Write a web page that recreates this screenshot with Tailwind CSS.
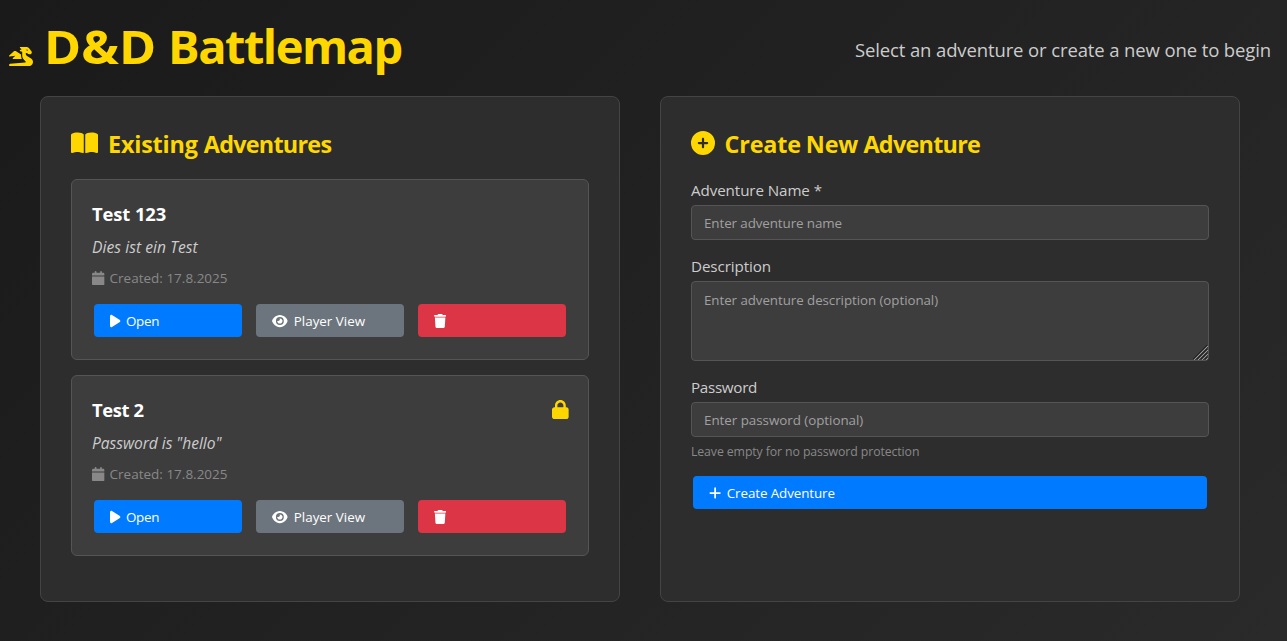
<!DOCTYPE html>
<html lang="en">
<head>
<meta charset="utf-8">
<title>D&amp;D Battlemap</title>
<script src="https://cdn.jsdelivr.net/npm/@tailwindcss/browser@4"></script>
</head>
<body class="h-[641px] overflow-hidden bg-linear-135 from-[#1a1a1a] to-[#2a2a2a] font-['Open_Sans','Noto_Sans',sans-serif] text-[#e0e0e0] whitespace-nowrap">
<svg class="hidden" aria-hidden="true">
  <symbol id="dragon" viewBox="0 0 640 512"><path d="M352 124.5l-51.9-13c-6.5-1.6-11.3-7.1-12-13.8s2.8-13.1 8.7-16.1l40.8-20.4L294.4 28.8c-5.5-4.1-7.8-11.3-5.6-17.9S297.1 0 304 0L416 0l32 0 16 0c30.2 0 58.7 14.2 76.8 38.4l57.6 76.8c6.2 8.3 9.6 18.4 9.6 28.8c0 26.5-21.5 48-48 48l-21.5 0c-17 0-33.3-6.7-45.3-18.7L480 160l-32 0 0 21.5c0 24.8 12.8 47.9 33.8 61.1l106.6 66.6c32.1 20.1 51.6 55.2 51.6 93.1C640 462.9 590.9 512 530.2 512L496 512l-64 0L32.3 512c-3.3 0-6.6-.4-9.6-1.4C13.5 507.8 6 501 2.4 492.1C1 488.7 .2 485.2 0 481.4c-.2-3.7 .3-7.3 1.3-10.7c2.8-9.2 9.6-16.7 18.6-20.4c3-1.2 6.2-2 9.5-2.2L433.3 412c8.3-.7 14.7-7.7 14.7-16.1c0-4.3-1.7-8.4-4.7-11.4l-44.4-44.4c-30-30-46.9-70.7-46.9-113.1l0-45.5 0-57zM512 72.3c0-.1 0-.2 0-.3s0-.2 0-.3l0 .6zm-1.3 7.4L464.3 68.1c-.2 1.3-.3 2.6-.3 3.9c0 13.3 10.7 24 24 24c10.6 0 19.5-6.8 22.7-16.3zM130.9 116.5c16.3-14.5 40.4-16.2 58.5-4.1l130.6 87 0 27.5c0 32.8 8.4 64.8 24 93l-232 0c-6.7 0-12.7-4.2-15-10.4s-.5-13.3 4.6-17.7L171 232.3 18.4 255.8c-7 1.1-13.9-2.6-16.9-9s-1.5-14.1 3.8-18.8L130.9 116.5z"/></symbol>
  <symbol id="book" viewBox="0 0 576 512"><path d="M249.6 471.5c10.8 3.8 22.4-4.1 22.4-15.5l0-377.4c0-4.2-1.6-8.4-5-11C247.4 52 202.4 32 144 32C93.5 32 46.3 45.3 18.1 56.1C6.8 60.5 0 71.7 0 83.8L0 454.1c0 11.9 12.8 20.2 24.1 16.5C55.6 460.1 105.5 448 144 448c33.9 0 79 14 105.6 23.5zm76.8 0C353 462 398.1 448 432 448c38.5 0 88.4 12.1 119.9 22.6c11.3 3.8 24.1-4.6 24.1-16.5l0-370.3c0-12.1-6.8-23.3-18.1-27.6C529.7 45.3 482.5 32 432 32c-58.4 0-103.4 20-123 35.6c-3.3 2.6-5 6.8-5 11L304 456c0 11.4 11.7 19.3 22.4 15.5z"/></symbol>
  <symbol id="pluscircle" viewBox="0 0 512 512"><path d="M256 512A256 256 0 1 0 256 0a256 256 0 1 0 0 512zM232 344l0-64-64 0c-13.3 0-24-10.7-24-24s10.7-24 24-24l64 0 0-64c0-13.3 10.7-24 24-24s24 10.7 24 24l0 64 64 0c13.3 0 24 10.7 24 24s-10.7 24-24 24l-64 0 0 64c0 13.3-10.7 24-24 24s-24-10.7-24-24z"/></symbol>
  <symbol id="calendar" viewBox="0 0 448 512"><path d="M96 32l0 32L48 64C21.5 64 0 85.5 0 112l0 48 448 0 0-48c0-26.5-21.5-48-48-48l-48 0 0-32c0-17.7-14.3-32-32-32s-32 14.3-32 32l0 32L160 64l0-32c0-17.7-14.3-32-32-32S96 14.3 96 32zM448 192L0 192 0 464c0 26.5 21.5 48 48 48l352 0c26.5 0 48-21.5 48-48l0-272z"/></symbol>
  <symbol id="play" viewBox="0 0 384 512"><path d="M73 39c-14.8-9.1-33.4-9.4-48.5-.9S0 62.6 0 80L0 432c0 17.4 9.4 33.4 24.5 41.9s33.7 8.1 48.5-.9L361 297c14.3-8.7 23-24.2 23-41s-8.7-32.2-23-41L73 39z"/></symbol>
  <symbol id="eye" viewBox="0 0 576 512"><path d="M288 32c-80.8 0-145.5 36.8-192.6 80.6C48.6 156 17.3 208 2.5 243.7c-3.3 7.9-3.3 16.7 0 24.6C17.3 304 48.6 356 95.4 399.4C142.5 443.2 207.2 480 288 480s145.5-36.8 192.6-80.6c46.8-43.5 78.1-95.4 93-131.1c3.3-7.9 3.3-16.7 0-24.6c-14.9-35.7-46.2-87.7-93-131.1C433.5 68.8 368.8 32 288 32zM144 256a144 144 0 1 1 288 0 144 144 0 1 1 -288 0zm144-64c0 35.3-28.7 64-64 64c-7.1 0-13.9-1.2-20.3-3.3c-5.5-1.8-11.9 1.6-11.7 7.4c.3 6.9 1.3 13.8 3.2 20.7c13.7 51.2 66.4 81.6 117.6 67.9s81.6-66.4 67.9-117.6c-11.1-41.5-47.8-69.4-88.6-71.1c-5.8-.2-9.2 6.1-7.4 11.7c2.1 6.4 3.3 13.2 3.3 20.3z"/></symbol>
  <symbol id="trash" viewBox="0 0 448 512"><path d="M135.2 17.7L128 32 32 32C14.3 32 0 46.3 0 64S14.3 96 32 96l384 0c17.7 0 32-14.3 32-32s-14.3-32-32-32l-96 0-7.2-14.3C307.4 6.8 296.3 0 284.2 0L163.8 0c-12.1 0-23.2 6.8-28.6 17.7zM416 128L32 128 53.2 467c1.6 25.3 22.6 45 47.9 45l245.8 0c25.3 0 46.3-19.7 47.9-45L416 128z"/></symbol>
  <symbol id="lock" viewBox="0 0 448 512"><path d="M144 144l0 48 160 0 0-48c0-44.2-35.8-80-80-80s-80 35.8-80 80zM80 192l0-48C80 64.5 144.5 0 224 0s144 64.5 144 144l0 48 16 0c35.3 0 64 28.7 64 64l0 192c0 35.3-28.7 64-64 64L64 512c-35.3 0-64-28.7-64-64L0 256c0-35.3 28.7-64 64-64l16 0z"/></symbol>
  <symbol id="plus" viewBox="0 0 448 512"><path d="M256 80c0-17.7-14.3-32-32-32s-32 14.3-32 32l0 144L48 224c-17.7 0-32 14.3-32 32s14.3 32 32 32l144 0 0 144c0 17.7 14.3 32 32 32s32-14.3 32-32l0-144 144 0c17.7 0 32-14.3 32-32s-14.3-32-32-32l-144 0 0-144z"/></symbol>
</svg>

<header class="flex h-24 items-start justify-between pl-[8.5px] pr-4">
  <div class="flex text-[#ffd700]">
    <svg class="mt-[47px] h-[19.2px] w-6 fill-current"><use href="#dragon"/></svg>
    <h1 class="mt-[14px] ml-[11px] text-[47px] leading-[64px] font-bold"><span class="mr-[7.5px] inline-block origin-left scale-x-[1.07]">D&amp;D</span> <span class="tracking-[-1.5px]">Battlemap</span></h1>
  </div>
  <p class="mt-[35px] text-[18.5px] leading-[30px] tracking-[-0.12px] text-[#ccc]">Select an adventure or create a new one to begin</p>
</header>

<main class="flex gap-10 pl-10">
  <section class="h-[506px] w-[580px] rounded-lg border border-[#444] bg-[#2d2d2d] p-[30px]">
    <h2 class="flex h-[34px] items-center gap-[10px] text-[23.4px] leading-[34px] font-bold text-[#ffd700]">
      <svg class="mb-[2px] h-6 w-[27px] fill-current"><use href="#book"/></svg><span><span class="tracking-[-0.2px]">Existing</span> <span class="tracking-[-0.75px]">Adventures</span></span></h2>

    <article class="mt-[18px] h-[181px] rounded-md border border-[#555] bg-[#3d3d3d] p-5">
      <h3 class="text-[18.4px] leading-7 font-bold tracking-[-0.1px] text-white">Test 123</h3>
      <p class="mt-[7px] text-[15.6px] leading-6 tracking-[0.05px] text-[#ccc] italic">Dies ist ein Test</p>
      <p class="mt-[9px] flex h-5 items-center gap-[5px] text-[13.5px] leading-5 text-[#888]"><svg class="h-[14.4px] w-[12.6px] fill-current"><use href="#calendar"/></svg>Created: 17.8.2025</p>
      <div class="mt-4 ml-0.5 flex gap-[14px] text-[13.4px] tracking-[-0.1px] text-white">
        <button class="flex h-[33px] w-[148px] items-center gap-[5.5px] rounded bg-[#007bff] pl-4"><svg class="h-[14px] w-[10.5px] fill-current"><use href="#play"/></svg><span class="mt-px tracking-[-0.3px]">Open</span></button>
        <button class="flex h-[33px] w-[148px] items-center gap-[6px] rounded bg-[#6c757d] pl-4"><svg class="h-[14px] w-[15.75px] fill-current"><use href="#eye"/></svg><span class="mt-px tracking-normal">Player View</span></button>
        <button class="flex h-[33px] w-[148px] items-center rounded bg-[#dc3545] pl-4" aria-label="Delete"><svg class="h-[14px] w-[12.25px] fill-current"><use href="#trash"/></svg></button>
      </div>
    </article>

    <article class="mt-[15px] h-[181px] rounded-md border border-[#555] bg-[#3d3d3d] p-5">
      <div class="flex justify-between">
        <h3 class="text-[18.4px] leading-7 font-bold tracking-[-0.4px] text-white">Test 2</h3>
        <svg class="mt-[3.5px] mr-[-1px] h-[19.2px] w-[16.8px] fill-[#ffd700]"><use href="#lock"/></svg>
      </div>
      <p class="mt-[7px] text-[15.6px] leading-6 tracking-[-0.05px] text-[#ccc] italic">Password is "hello"</p>
      <p class="mt-[9px] flex h-5 items-center gap-[5px] text-[13.5px] leading-5 text-[#888]"><svg class="h-[14.4px] w-[12.6px] fill-current"><use href="#calendar"/></svg>Created: 17.8.2025</p>
      <div class="mt-4 ml-0.5 flex gap-[14px] text-[13.4px] tracking-[-0.1px] text-white">
        <button class="flex h-[33px] w-[148px] items-center gap-[5.5px] rounded bg-[#007bff] pl-4"><svg class="h-[14px] w-[10.5px] fill-current"><use href="#play"/></svg><span class="mt-px tracking-[-0.3px]">Open</span></button>
        <button class="flex h-[33px] w-[148px] items-center gap-[6px] rounded bg-[#6c757d] pl-4"><svg class="h-[14px] w-[15.75px] fill-current"><use href="#eye"/></svg><span class="mt-px tracking-normal">Player View</span></button>
        <button class="flex h-[33px] w-[148px] items-center rounded bg-[#dc3545] pl-4" aria-label="Delete"><svg class="h-[14px] w-[12.25px] fill-current"><use href="#trash"/></svg></button>
      </div>
    </article>
  </section>

  <section class="h-[506px] w-[580px] rounded-lg border border-[#444] bg-[#2d2d2d] p-[30px]">
    <h2 class="flex h-[34px] items-center gap-[9.5px] text-[23.4px] leading-[34px] font-bold text-[#ffd700] [word-spacing:-0.75px]">
      <svg class="mb-[2px] h-6 w-6 fill-current"><use href="#pluscircle"/></svg><span><span class="tracking-[-0.2px]">Create New</span> <span class="tracking-[-0.75px]">Adventure</span></span></h2>
    <form class="mt-[17px] flex flex-col">
      <label class="mb-[3px] text-[15.2px] leading-6 tracking-[-0.1px] text-[#ccc]">Adventure Name *</label>
      <input class="h-[35px] rounded border border-[#555] bg-[#3d3d3d] px-3 text-[13.4px] tracking-[-0.1px] placeholder:text-[#a0a0a0]" placeholder="Enter adventure name">
      <label class="mt-[14px] mb-[3px] text-[15.2px] leading-6 tracking-[-0.1px] text-[#ccc]">Description</label>
      <div class="relative h-20">
        <textarea class="block h-20 w-full resize-none rounded border border-[#555] bg-[#3d3d3d] px-3 py-2 text-[13.3px] leading-5 tracking-[-0.04px] placeholder:text-[#a0a0a0]" placeholder="Enter adventure description (optional)"></textarea>
        <svg class="absolute right-px bottom-px h-[15px] w-[15px]" viewBox="0 0 15 15" fill="none">
          <path stroke="#222" d="M0 14L14 0M4 14L14 4M8 14L14 8M12 14L14 12"/>
          <path stroke="#999" d="M1 15L15 1M5 15L15 5M9 15L15 9M13 15L15 13"/>
        </svg>
      </div>
      <label class="mt-[14px] mb-[3px] text-[15.2px] leading-6 tracking-[-0.3px] text-[#ccc]">Password</label>
      <input class="h-[35px] rounded border border-[#555] bg-[#3d3d3d] px-3 text-[13.4px] tracking-[-0.04px] placeholder:text-[#a0a0a0]" placeholder="Enter password (optional)">
      <small class="mt-[6px] text-[12.3px] leading-[18px] tracking-[-0.1px] text-[#888]">Leave empty for no password protection</small>
      <button type="button" class="mx-0.5 mt-[15px] flex h-[33px] items-center gap-[5.5px] rounded bg-[#007bff] pl-4 text-[13.4px] tracking-[-0.1px] text-white"><svg class="h-[14px] w-[12.25px] fill-current"><use href="#plus"/></svg><span class="mt-px">Create Adventure</span></button>
    </form>
  </section>
</main>
</body>
</html>
